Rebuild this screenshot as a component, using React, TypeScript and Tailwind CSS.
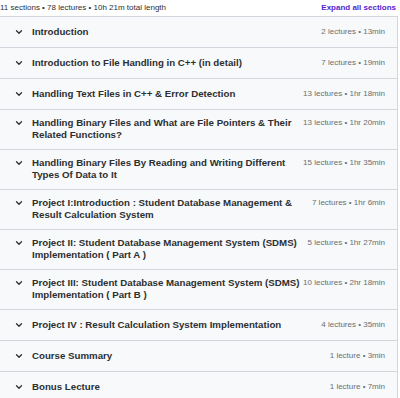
import React from "react";

type Section = { lines: string[]; meta: string };

const sections: Section[] = [
  { lines: ["Introduction"], meta: "2 lectures • 13min" },
  { lines: ["Introduction to File Handling in C++ (in detail)"], meta: "7 lectures • 19min" },
  { lines: ["Handling Text Files in C++ & Error Detection"], meta: "13 lectures • 1hr 18min" },
  { lines: ["Handling Binary Files and What are File Pointers & Their", "Related Functions?"], meta: "13 lectures • 1hr 20min" },
  { lines: ["Handling Binary Files By Reading and Writing Different", "Types Of Data to It"], meta: "15 lectures • 1hr 35min" },
  { lines: ["Project I:Introduction : Student Database Management &", "Result Calculation System"], meta: "7 lectures • 1hr 6min" },
  { lines: ["Project II: Student Database Management System (SDMS)", "Implementation ( Part A )"], meta: "5 lectures • 1hr 27min" },
  { lines: ["Project III: Student Database Management System (SDMS)", "Implementation ( Part B )"], meta: "10 lectures • 2hr 18min" },
  { lines: ["Project IV : Result Calculation System Implementation"], meta: "4 lectures • 35min" },
  { lines: ["Course Summary"], meta: "1 lecture • 3min" },
  { lines: ["Bonus Lecture"], meta: "1 lecture • 7min" },
];

function Chevron() {
  return (
    <svg width="8" height="8" viewBox="0 0 8 8" className="shrink-0">
      <path d="M1.5 2.8 L4 5.2 L6.5 2.8" fill="none" stroke="#2d2f31" strokeWidth="1.3" strokeLinecap="round" strokeLinejoin="round" />
    </svg>
  );
}

export default function App() {
  return (
    <div className="w-[400px] h-[398px] overflow-hidden bg-white" style={{ fontFamily: '"Liberation Sans", Arial, sans-serif' }}>
      <div className="flex items-center justify-between h-[16px] pr-[4px] text-[8px]">
        <span className="text-[#2d2f31] whitespace-nowrap">11 sections • 78 lectures • 10h 21m total length</span>
        <span className="text-[#5624d0] font-bold whitespace-nowrap">Expand all sections</span>
      </div>
      <div className="w-[398px] border-t border-r border-[#d1d7dc]">
        {sections.map((s, i) => {
          const two = s.lines.length > 1;
          return (
            <div
              key={i}
              className={`flex items-start bg-[#f7f9fa] border-b border-[#d1d7dc] pl-[15px] pr-[12px] ${two ? "h-[40px] pt-[7px]" : "h-[31px] pt-[9px]"}`}
            >
              <div className="h-[12px] flex items-center mr-[9px]">
                <Chevron />
              </div>
              <div className="flex-1 text-[9.7px] font-bold leading-[12px] text-[#2d2f31]">
                {s.lines.map((l, j) => (
                  <div key={j} className="whitespace-nowrap">{l}</div>
                ))}
              </div>
              <div className="text-[8px] leading-[12px] text-[#6a6f73] whitespace-nowrap">{s.meta}</div>
            </div>
          );
        })}
      </div>
    </div>
  );
}
